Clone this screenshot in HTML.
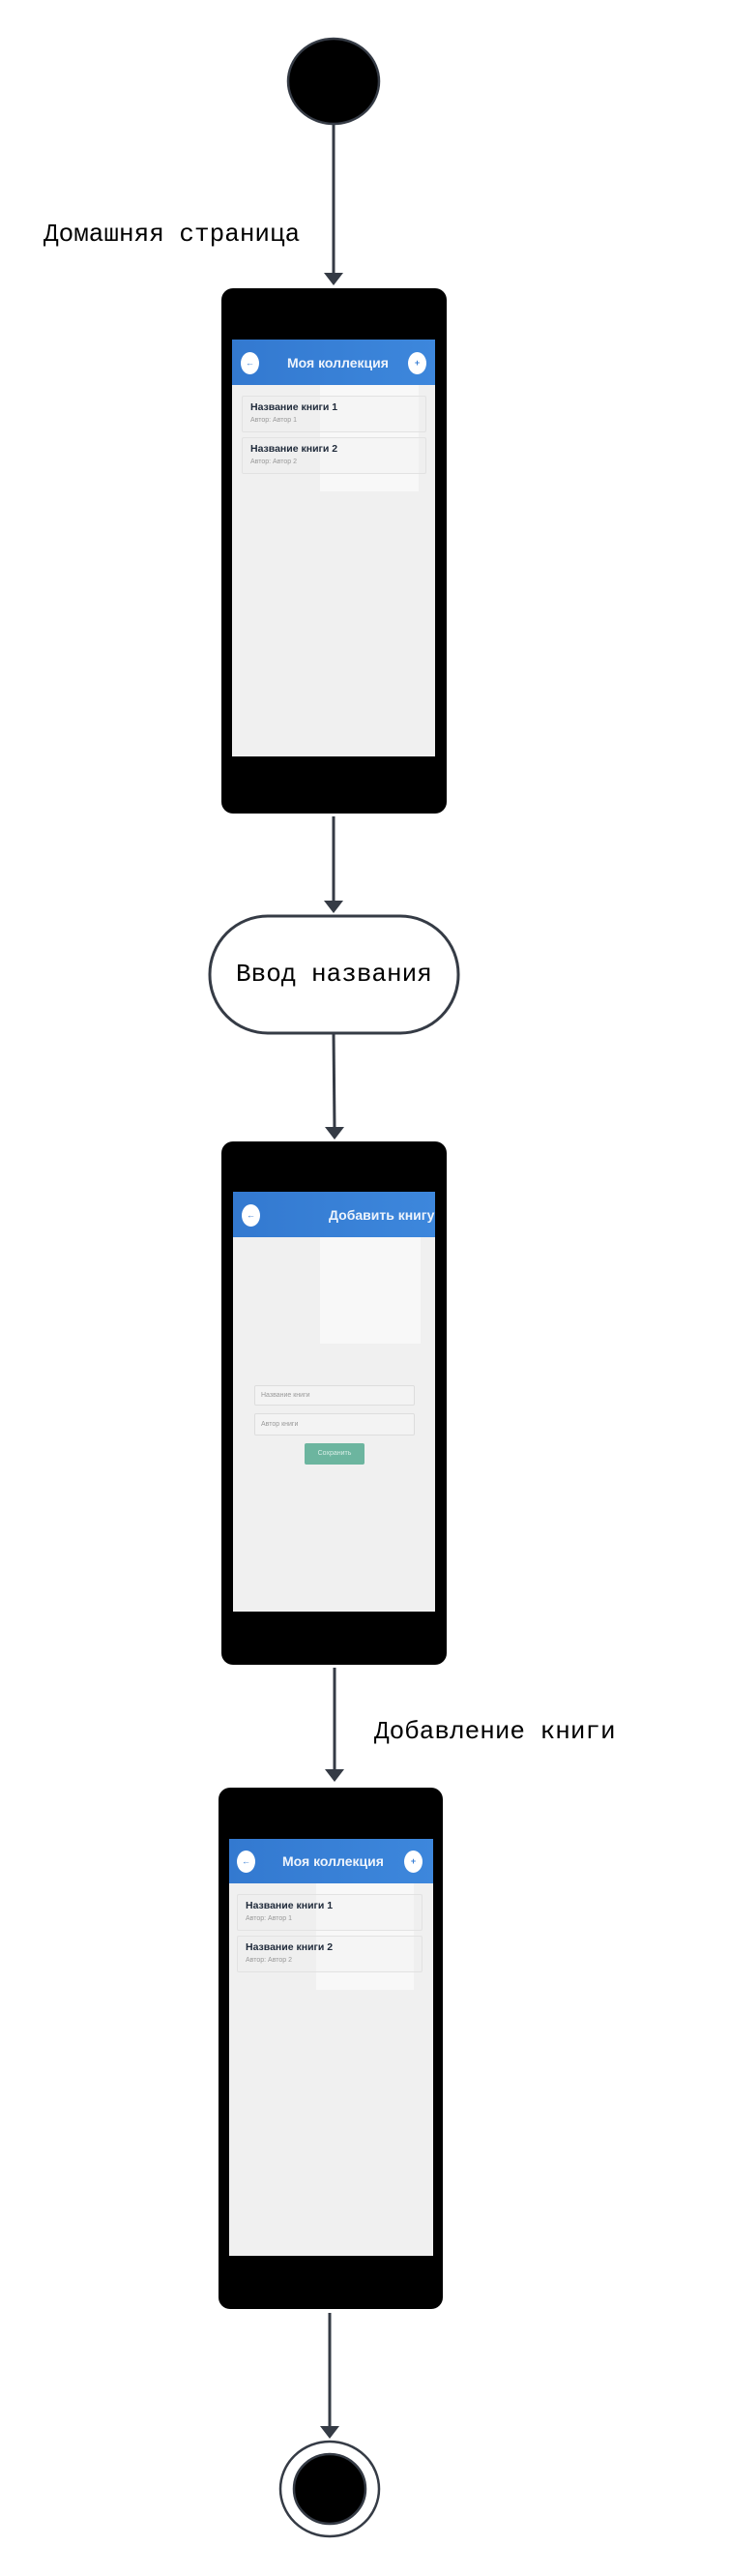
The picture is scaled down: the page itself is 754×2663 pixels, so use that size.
<!DOCTYPE html>
<html><head><meta charset="utf-8">
<style>
html,body{margin:0;padding:0;background:#fff;}
body{width:754px;height:2663px;position:relative;overflow:hidden;font-family:"Liberation Sans",sans-serif;}
.abs{position:absolute;}
.mono{font-family:"Liberation Mono",monospace;color:#000;white-space:nowrap;}
.phone{position:absolute;background:#000;border-radius:12px;}
.screen{position:absolute;background:#f0f0f0;overflow:hidden;}
.hdr{position:absolute;left:0;right:0;top:0;background:linear-gradient(90deg,#3379d0,#3d87dc);}
.ic{position:absolute;width:19px;height:23px;border-radius:50%;background:#fff;color:#3a7fd5;font-size:9px;text-align:center;line-height:23px;font-weight:bold;}
.ttl{position:absolute;color:#eef4fc;font-weight:bold;font-size:14px;white-space:nowrap;}
.card{position:absolute;border:1px solid #e2e2e2;border-radius:2px;background:rgba(240,240,240,0.3);z-index:2;}
.card b{position:absolute;left:8px;top:5px;font-size:10.5px;color:#1f2a3a;white-space:nowrap;}
.card span{position:absolute;left:8px;top:21px;font-size:7px;color:#999;white-space:nowrap;}
.ov{position:absolute;background:rgba(255,255,255,0.55);z-index:1;}
.inp{position:absolute;border:1px solid #ddd;border-radius:2px;background:#f3f3f3;font-size:7px;color:#999;padding-left:6px;box-sizing:border-box;}
</style></head><body>
<svg class="abs" style="left:0;top:0" width="754" height="2663">
<g stroke="#353b45" stroke-width="3" fill="none">
<line x1="345" y1="128" x2="345" y2="284"/>
<line x1="345" y1="844" x2="345" y2="933"/>
<line x1="345" y1="1068" x2="346" y2="1167"/>
<line x1="346" y1="1724" x2="346" y2="1831"/>
<line x1="341" y1="2391" x2="341" y2="2510"/>
</g>
<g fill="#353b45">
<polygon points="335,282 355,282 345,295"/>
<polygon points="335,931 355,931 345,944"/>
<polygon points="336,1165 356,1165 346,1178"/>
<polygon points="336,1829 356,1829 346,1842"/>
<polygon points="331,2508 351,2508 341,2521"/>
</g>
<ellipse cx="345" cy="84" rx="47" ry="44" fill="#000" stroke="#353b45" stroke-width="2.5"/>
<rect x="217" y="947" width="257" height="121" rx="60" ry="60" fill="#fff" stroke="#353b45" stroke-width="3"/>
<ellipse cx="341" cy="2573" rx="51" ry="49" fill="#fff" stroke="#353b45" stroke-width="2.5"/>
<ellipse cx="341" cy="2573" rx="37" ry="36" fill="#000" stroke="#353b45" stroke-width="2.5"/>
</svg>

<div class="abs mono" style="left:45px;top:227px;font-size:26px;">Домашняя страница</div>
<div class="abs mono" style="left:244px;top:992px;font-size:26px;">Ввод названия</div>
<div class="abs mono" style="left:387px;top:1775px;font-size:26px;">Добавление книги</div>

<!-- Phone 1 -->
<div class="phone" style="left:229px;top:298px;width:233px;height:543px;">
 <div class="screen" style="left:11px;top:53px;width:210px;height:431px;">
  <div class="hdr" style="height:47px;"></div>
  <div class="ic" style="left:9px;top:13px;">←</div>
  <div class="ic" style="left:182px;top:13px;">+</div>
  <div class="ttl" style="left:57px;top:16px;">Моя коллекция</div>
  <div class="card" style="left:10px;top:58px;width:189px;height:36px;"><b>Название книги 1</b><span>Автор: Автор 1</span></div>
  <div class="card" style="left:10px;top:101px;width:189px;height:36px;"><b>Название книги 2</b><span>Автор: Автор 2</span></div>
  <div class="ov" style="left:91px;top:47px;width:102px;height:110px;"></div>
 </div>
</div>

<!-- Phone 2 -->
<div class="phone" style="left:229px;top:1180px;width:233px;height:541px;">
 <div class="screen" style="left:12px;top:52px;width:209px;height:434px;">
  <div class="hdr" style="height:47px;"></div>
  <div class="ic" style="left:9px;top:13px;">←</div>
  <div class="ttl" style="left:99px;top:16px;">Добавить книгу</div>
  <div class="ov" style="left:90px;top:47px;width:104px;height:110px;"></div>
  <div class="inp" style="left:22px;top:200px;width:166px;height:21px;line-height:19px;">Название книги</div>
  <div class="inp" style="left:22px;top:229px;width:166px;height:23px;line-height:21px;">Автор книги</div>
  <div class="abs" style="left:74px;top:260px;width:62px;height:22px;background:#6cb59f;border-radius:2px;color:#d8eee7;font-size:7px;text-align:center;line-height:22px;">Сохранить</div>
 </div>
</div>

<!-- Phone 3 -->
<div class="phone" style="left:226px;top:1848px;width:232px;height:539px;">
 <div class="screen" style="left:11px;top:53px;width:211px;height:431px;">
  <div class="hdr" style="height:46px;"></div>
  <div class="ic" style="left:8px;top:12px;">←</div>
  <div class="ic" style="left:181px;top:12px;">+</div>
  <div class="ttl" style="left:55px;top:15px;">Моя коллекция</div>
  <div class="card" style="left:8px;top:57px;width:190px;height:36px;"><b>Название книги 1</b><span>Автор: Автор 1</span></div>
  <div class="card" style="left:8px;top:100px;width:190px;height:36px;"><b>Название книги 2</b><span>Автор: Автор 2</span></div>
  <div class="ov" style="left:90px;top:46px;width:101px;height:110px;"></div>
 </div>
</div>
</body></html>
